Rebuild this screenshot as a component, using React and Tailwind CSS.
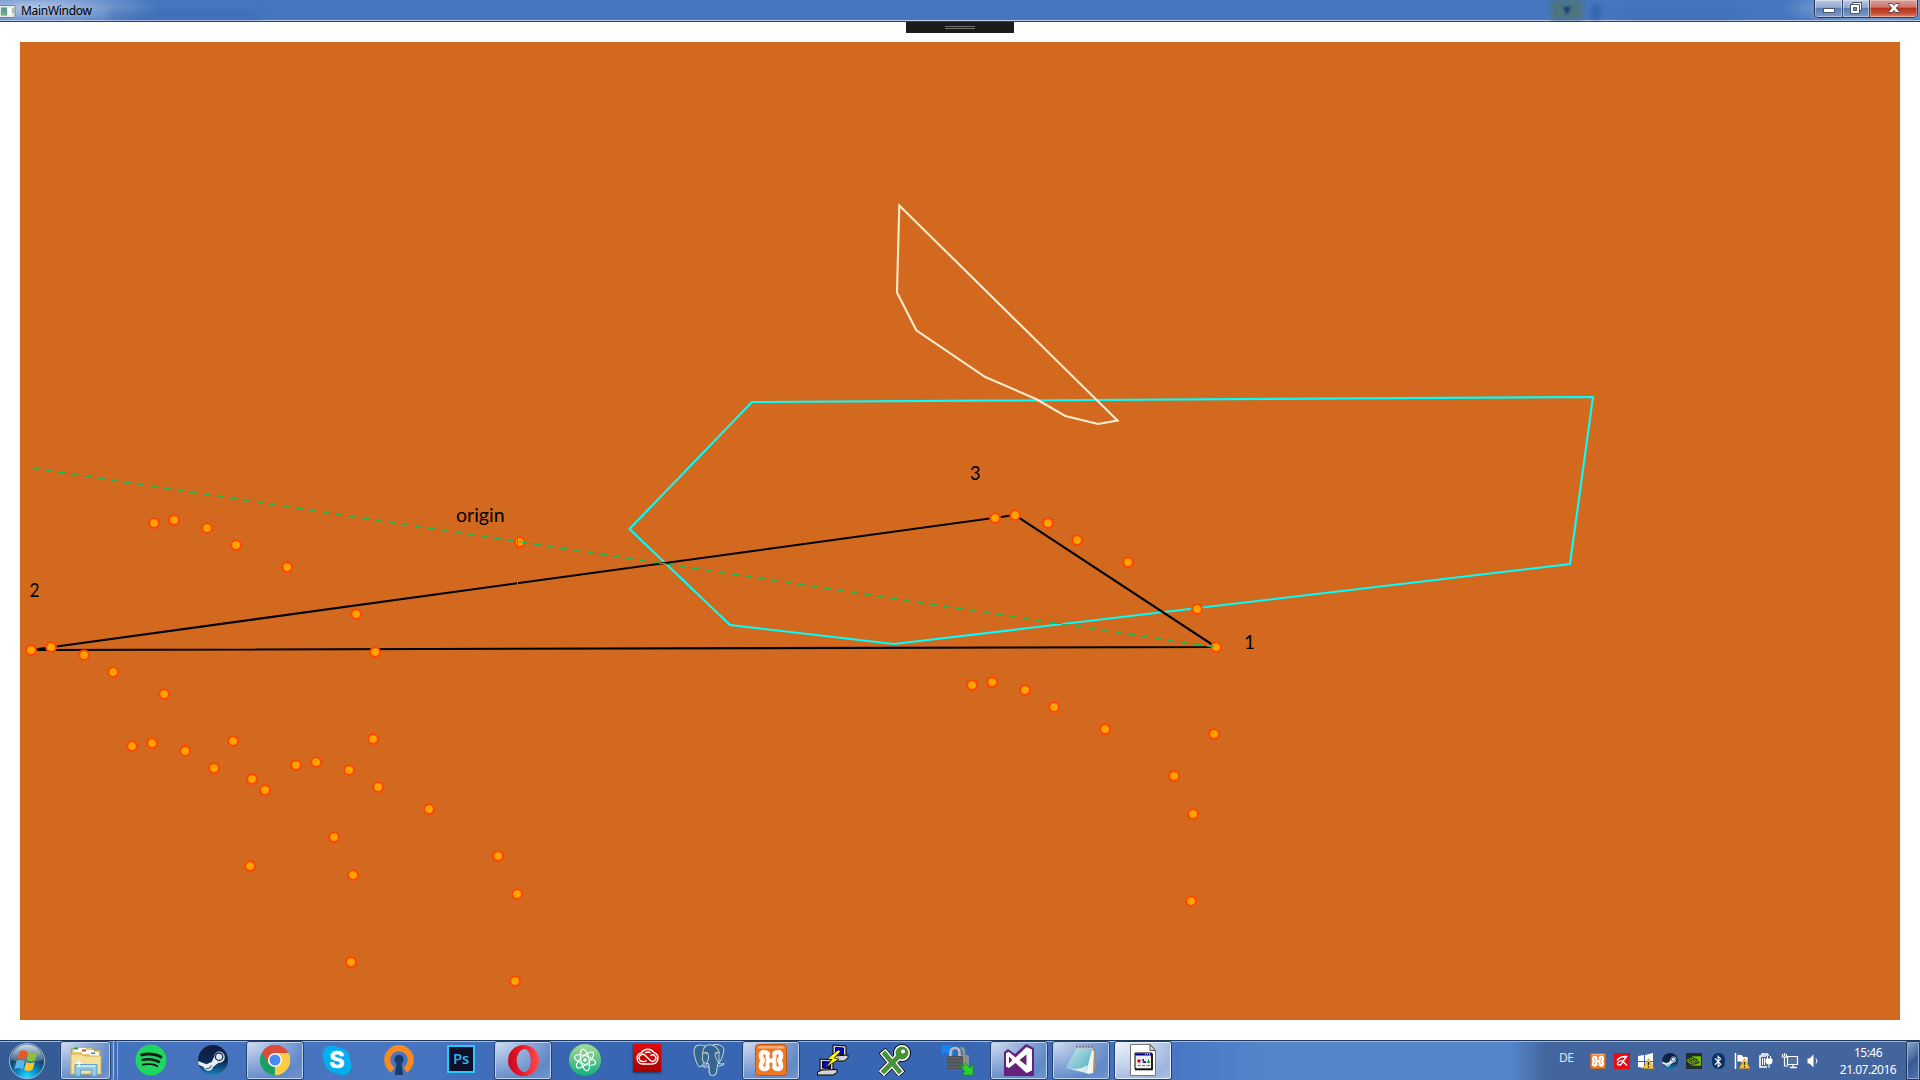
import React from "react";
import { FaSpotify, FaBluetoothB } from "react-icons/fa";
import { SiPostgresql, SiNvidia } from "react-icons/si";

const ARC = [[0, 0], [20, -3], [53, 5], [82, 22], [133, 44], [202, 91], [221, 129], [219, 216]];
const ARC_STARTS = [[154, 523], [31, 650], [132, 746], [296, 765], [995, 518], [972, 685]];

function Dot({ x, y }) {
  return <circle cx={x + 0.1} cy={y + 0.1} r="4.9" fill="#ffa500" stroke="#ff4500" strokeWidth="2.1" />;
}

function Plot() {
  return (
    <svg className="block h-[978px] w-[1880px]" viewBox="20 42 1880 978">
      <g fill="none" strokeWidth="2.1">
        <path stroke="#00ffff" d="M752 402 1593 397 1570 564 894 644 730 625 629.5 529Z" />
        <path stroke="#ffebcd" d="M899.3 205.5 897 292.5 916.3 330.3 985.3 377 1036 399 1065.3 416 1098 424 1117.5 420.5Z" />
        <path stroke="#000" d="M31 650 1216 647 1015 515Z" />
      </g>
      {ARC_STARTS.map(([sx, sy]) => ARC.map(([dx, dy]) => <Dot key={`${sx + dx}-${sy + dy}`} x={sx + dx} y={sy + dy} />))}
      <Dot x={519.6} y={542} />
      <g fill="none" stroke="#22b14c" strokeWidth="1" shapeRendering="crispEdges">
        <path d="M34 468.3 1214 647" />
        <path d="M517.5 413.5V647.5" />
      </g>
      <g fill="#000" className="font-['Lato',sans-serif] text-[20px]">
        <text x="456" y="522" textLength="48.5" lengthAdjust="spacingAndGlyphs">origin</text>
        <text x="29.5" y="597" textLength="10" lengthAdjust="spacingAndGlyphs">2</text>
        <text x="970" y="480" textLength="10.5" lengthAdjust="spacingAndGlyphs">3</text>
        <text x="1244" y="649" textLength="11" lengthAdjust="spacingAndGlyphs">1</text>
      </g>
    </svg>
  );
}

function TitleBar() {
  return (
    <header className="relative flex h-[22px] shrink-0 items-start justify-between overflow-hidden border-b border-[#2b4268] bg-[#4776bf] shadow-[inset_0_-1px_0_#b9cbe8]">
      <div className="absolute -left-8 -top-3 h-10 w-[190px] bg-[radial-gradient(ellipse_at_35%_50%,#b4c8e8,#4776bf00_72%)]" />
      <div className="absolute left-[108px] top-[11px] h-2 w-[150px] bg-[#3260a8]/40 blur-[4px]" />
      <div className="absolute left-[1551px] top-0 h-[20px] w-8 bg-[#4c7580] blur-[2px]" />
      <div className="absolute left-[1560px] top-[5px] text-[14px] leading-[10px] text-[#173e7b] blur-[1px]">▼</div>
      <div className="absolute left-[1592px] top-[5px] h-[14px] w-2 rotate-12 bg-[#2457a5]/70 blur-[3px]" />
      <div className="absolute left-[1620px] top-[10px] h-[8px] w-[120px] bg-[#3563a8]/40 blur-[4px]" />
      <div className="absolute -top-3 left-[1780px] h-10 w-[180px] bg-[radial-gradient(ellipse,#a9bfe3,#4776bf00_70%)]" />
      <div className="relative flex items-center pt-[4px]">
        <svg className="block h-[13px] w-4" viewBox="0 0 16 13">
          <rect x="-1" y=".5" width="16" height="12" rx="1" fill="#e7e9ea" stroke="#7d8792" />
          <path d="M1 2.500h6v8H1z" fill="#5899a0" />
          <path d="M2 10V4l5 6z" fill="#68b286" />
          <path d="M8 3h3v7H8z" fill="#fff" />
          <path d="M12 3h2v5h-2z" fill="#a4c8ae" />
        </svg>
        <span className="ml-[5px] whitespace-nowrap font-['Noto_Sans',sans-serif] text-[12px] leading-[14px] tracking-[-0.3px] text-black">MainWindow</span>
      </div>
      <div className="relative mr-[2px] flex h-[18px] overflow-hidden rounded-b-[5px] border border-t-0 border-[#263757]">
        <div className="flex w-[28px] items-center justify-center border-r border-[#34486d] bg-[linear-gradient(#b9c9e2_0,#91a8cd_45%,#5c7db1_50%,#7f9ccb)] shadow-[inset_0_0_0_1px_#ffffff66]">
          <div className="mt-[4px] h-[5px] w-[12px] border border-[#4b556b] bg-white" />
        </div>
        <div className="flex w-[27px] items-center justify-center border-r border-[#34486d] bg-[linear-gradient(#b9c9e2_0,#91a8cd_45%,#5c7db1_50%,#7f9ccb)] shadow-[inset_0_0_0_1px_#ffffff66]">
          <svg className="mb-[2px] block h-3 w-3" viewBox="0 0 12 12">
            <path d="M2.500.5h9v8h-9z" fill="#fff" stroke="#4b556b" />
            <path d="M.5 2.500h9v9h-9z" fill="#fff" stroke="#4b556b" />
            <path d="M3.500 5.500h3v3h-3z" fill="#6f8fbd" stroke="#4b556b" />
          </svg>
        </div>
        <div className="flex w-[47px] items-center justify-center bg-[linear-gradient(#dca09b_0,#cd756a_42%,#b5301c_48%,#c94f36_80%,#df8b70)] shadow-[inset_0_0_0_1px_#ffffff55]">
          <svg className="mb-[2px] block h-3 w-3" viewBox="0 0 12 12">
            <path d="M.8 1.500h3.500L6 3.500l1.700-2h3.500v1.200L8.300 6l2.900 3.300v1.200H7.700L6 8.500l-1.700 2H.8V9.300L3.700 6 .8 2.700z" fill="#fff" stroke="#5d4251" />
          </svg>
        </div>
      </div>
    </header>
  );
}

function Icon({ children, size = "h-8 w-8" }) {
  return <svg className={`block ${size}`} viewBox="0 0 32 32">{children}</svg>;
}

function StartOrb() {
  return (
    <svg className="ml-[8px] mt-[1px] block h-[38px] w-[38px]" viewBox="0 0 38 38">
      <defs>
        <radialGradient id="orb" cx=".5" cy=".95" r=".8">
          <stop offset="0" stopColor="#23dcff" /><stop offset=".35" stopColor="#0c8fc9" /><stop offset=".75" stopColor="#12446e" /><stop offset="1" stopColor="#35597d" />
        </radialGradient>
        <linearGradient id="orbShine" x2="0" y2="1"><stop stopColor="#dbe7f0" stopOpacity=".95" /><stop offset="1" stopColor="#8ba6bd" stopOpacity=".35" /></linearGradient>
      </defs>
      <circle cx="19" cy="19" r="17.500" fill="url(#orb)" stroke="#a6c0d8" />
      <path d="M3 18a16 15.500 0 0 1 32 0q-15 4-32 0z" fill="url(#orbShine)" />
      <path d="M11.500 9.500q4-2.500 8 .2l-2 8q-4-2.500-8.500-.2z" fill="#ea5727" />
      <path d="M20.500 10.200q4.500 2.300 9-.2l-2.300 8.300q-4 2.300-8.500-.2z" fill="#8fc03b" />
      <path d="M8.500 19q4.300-2.300 8.500.3l-2.200 8q-4-2.500-8.300-.3z" fill="#5fb4e8" />
      <path d="M18.300 20q4.400 2.300 8.500-.2l-2.200 8q-4.200 2.300-8.500 0z" fill="#fdc72c" />
    </svg>
  );
}

function Explorer() {
  return (
    <Icon>
      <path d="M1.500 6V3.500H8L10 5h4V3l8-.5 1 3h7V28H1z" fill="#e9ca72" stroke="#c3a14b" />
      <path d="M4 3h12v4H4z" fill="#fff" /><path d="M4 2.500h4v2H4z" fill="#18a830" />
      <path d="M12 5h12v4H12z" fill="#fff" /><path d="M12 4.500h4v2h-4z" fill="#df4533" />
      <path d="M20 7.500h9v4h-9z" fill="#fff" /><path d="M21 7.500h4v1.500h-4z" fill="#2d86e4" />
      <path d="M1 9h11l2 2h17v18H1z" fill="#f4e09a" stroke="#d0b261" />
      <path d="M5 31V19.500h22V31h-5.500v-6h-11v6z" fill="#8ecbe8" stroke="#5ba0c5" />
      <path d="M6.500 21h19" stroke="#d6f0fb" strokeWidth="1.500" />
      <path d="m9 13 .8 4.200 4.200.8-4.200.8L9 23l-.8-4.200L4 18l4.200-.8z" fill="#fff" />
    </Icon>
  );
}

function Spotify() {
  return (
    <div className="flex h-8 w-8 items-center justify-center rounded-full bg-[radial-gradient(#1a1a1a_60%,transparent_62%)]">
      <FaSpotify className="block h-8 w-8 text-[#1ed760]" />
    </div>
  );
}

function Steam({ small }) {
  return (
    <Icon size={small ? "h-4 w-4" : "h-[30px] w-[30px]"}>
      <defs><linearGradient id="steam" x2="0" y2="1"><stop stopColor="#101a3c" /><stop offset=".55" stopColor="#0b2a55" /><stop offset="1" stopColor="#1580b4" /></linearGradient></defs>
      <circle cx="16" cy="16" r="16" fill="url(#steam)" />
      <path d="M0 17 9 20.500 14.500 18 17 13q1-6 6-6a6 6 0 1 1-1 12l-6 4.500q-1 4-5 4-3.500 0-5-4L.8 21z" fill="#e8edf3" />
      <circle cx="22.500" cy="12.500" r="4.700" fill="#1a3157" /><circle cx="22.500" cy="12.500" r="3.300" fill="#dfe6ed" />
      <path d="M8 25q6 1 6-3.500" fill="none" stroke="#536884" strokeWidth="1.200" />
    </Icon>
  );
}

function Chrome() {
  return (
    <Icon size="h-[30px] w-[30px]">
      <path d="M16 16 2.140 8A16 16 0 0 1 29.860 8z" fill="#dd4b3e" />
      <path d="M16 16 29.860 8A16 16 0 0 1 16 32z" fill="#ffcd43" />
      <path d="M16 16V32A16 16 0 0 1 2.140 8z" fill="#1aa160" />
      <path d="M16 8.500h14.200L29.860 8A16 16 0 0 0 2.140 8l7.300 12z" fill="#dd4b3e" />
      <path d="M22.500 20 15.500 32A16 16 0 0 0 30.200 8.500H16z" fill="#ffcd43" />
      <circle cx="16" cy="16" r="7.500" fill="#fff" /><circle cx="16" cy="16" r="5.900" fill="#4a8af4" />
    </Icon>
  );
}

function Skype() {
  return (
    <Icon size="h-[30px] w-[30px]">
      <circle cx="10" cy="10" r="9.500" fill="#00aff0" /><circle cx="22" cy="22.500" r="9.500" fill="#00aff0" /><circle cx="16" cy="16" r="14" fill="#00aff0" />
      <text x="16" y="25" textAnchor="middle" fill="#fff" stroke="#fff" strokeWidth=".6" className="font-['Inter',sans-serif] text-[25px] font-bold">S</text>
    </Icon>
  );
}

function OpenVpn() {
  return (
    <Icon size="h-[30px] w-[30px]">
      <path d="M9.500 26.500A12.500 12.500 0 1 1 22.500 26.500" fill="none" stroke="#f78a20" strokeWidth="6.500" />
      <circle cx="16" cy="15.500" r="5" fill="#173c6c" /><path d="M13.500 19h5l2 13h-9z" fill="#173c6c" />
    </Icon>
  );
}

function Photoshop() {
  return (
    <div className="mb-[3px] flex h-[28px] w-[28px] items-center justify-center border-2 border-[#26c9fb] bg-[#100f2b] font-['Open_Sans',sans-serif] text-[15px] font-semibold leading-none tracking-[-0.2px] text-[#2bb8ed]">Ps</div>
  );
}

function Opera() {
  return (
    <Icon size="h-[31px] w-[31px]">
      <defs><linearGradient id="opera" x2="1"><stop stopColor="#c9061d" /><stop offset=".5" stopColor="#ee1c2e" /><stop offset="1" stopColor="#ff4b4b" /></linearGradient></defs>
      <path fillRule="evenodd" d="M16 0a16 16 0 1 0 0 32 16 16 0 1 0 0-32zm1 4c4 0 6.500 5.500 6.500 12S21 28 17 28 9 22.500 9 16 13 4 17 4z" fill="url(#opera)" />
    </Icon>
  );
}

function AtomIcon() {
  return (
    <Icon>
      <defs><linearGradient id="atom" x2="0" y2="1"><stop stopColor="#a6dc96" /><stop offset="1" stopColor="#10ad7c" /></linearGradient></defs>
      <circle cx="16" cy="16" r="16" fill="url(#atom)" />
      <g fill="none" stroke="#fff" strokeWidth="1.200" transform="rotate(18 16 16)">
        <ellipse cx="16" cy="16" rx="11" ry="4.200" /><ellipse cx="16" cy="16" rx="11" ry="4.200" transform="rotate(60 16 16)" /><ellipse cx="16" cy="16" rx="11" ry="4.200" transform="rotate(120 16 16)" />
      </g>
      <circle cx="16" cy="16" r="1.800" fill="#fff" />
    </Icon>
  );
}

function CreativeCloud() {
  return (
    <div className="mb-[4px] h-[28px] w-[28px] bg-[linear-gradient(#df0b0b,#a80000)] shadow-[0_1px_2px_#0008]">
      <svg className="block h-[28px] w-[28px]" viewBox="0 0 28 28">
        <g fill="none" stroke="#fff" strokeWidth="1.400">
          <path d="M9.500 20a5.800 5.800 0 0 1-1-11.400A7.500 7.500 0 0 1 20.800 8.300 6 6 0 0 1 19 20z" />
          <path d="M13.500 16.500Q12 18 10 17.500A3.600 3.600 0 1 1 12 11.200l5.500 5.300a3.200 3.200 0 1 0 0-4.800" />
          <path d="M12 9q3-2 5.500 0" />
        </g>
      </svg>
    </div>
  );
}

function Postgres() {
  return (
    <div className="relative h-8 w-8">
      <svg className="absolute inset-0 block h-8 w-8" viewBox="0 0 32 32"><path d="M9 1Q1 0 1 8q1 12 5 15l5-3h4l1 9q1 3 5 2 3-1 3-9l6-2-3-2q5-8 4-13-4-6-10-4l-5 0z" fill="#336791" /></svg>
      <SiPostgresql className="relative block h-8 w-8 text-[#c5d1d8]" />
    </div>
  );
}

function Xampp({ small }) {
  return (
    <Icon size={small ? "h-4 w-4" : "h-8 w-8"}>
      <rect x=".5" y=".5" width="31" height="31" rx="3" fill="#ef7622" stroke="#c6550d" />
      <path d="M2 4.500 4 2h24l2 2.500z" fill="#f9ad6f" />
      <g fill="none" stroke="#fff" strokeWidth="4.600" strokeLinecap="round" strokeLinejoin="round">
        <path d="M12.500 9.500Q11.500 8 9.500 8 6 8 6 11.500 6 14 8 16.500 6 19 6 21.500 6 25 9.500 25 11.500 25 12.500 23.500" />
        <path d="M19.500 9.500Q20.500 8 22.500 8 26 8 26 11.500 26 14 24 16.500 26 19 26 21.500 26 25 22.500 25 20.500 25 19.500 23.500" />
        <path strokeWidth="4" d="M12.500 9.500V13.500Q12.500 16.500 16 16.500T19.500 13.500V9.500M12.500 23.500V19.500Q12.500 16.500 16 16.500T19.500 19.500V23.500" />
      </g>
    </Icon>
  );
}

function Putty() {
  return (
    <Icon>
      <g stroke="#000" strokeWidth="1">
        <path d="m16 1 13 1v11l-13-1z" fill="#d4d4d4" /><path d="m18.500 3.500 8 .5v6.500l-8-.5z" fill="#0000e8" />
        <path d="m18 12 13-1v3l-4 3H14v-3z" fill="#d4d4d4" />
        <path d="m3 15 13 1v11L3 26z" fill="#d4d4d4" /><path d="m5.500 17.500 8 .5v6.500l-8-.5z" fill="#0000e8" />
        <path d="m5 26 15-.5v3L16 31H.5v-3z" fill="#d4d4d4" />
        <path d="m21 6-11 9 5 .5L8 24l14-9-5-1 7-7z" fill="#ffff00" strokeWidth=".7" />
      </g>
    </Icon>
  );
}

function GreenKey() {
  return (
    <Icon>
      <g fill="none">
        <path d="m6 10 14 17M5 27 20 12" stroke="#000" strokeWidth="9" strokeLinecap="square" />
        <circle cx="23" cy="9" r="7" fill="#000" stroke="#000" strokeWidth="4" />
        <path d="m6 10 14 17M5 27 20 12" stroke="#fff" strokeWidth="7.500" strokeLinecap="square" />
        <circle cx="23" cy="9" r="6.500" fill="#fff" stroke="#fff" strokeWidth="3" />
        <path d="m6 10 14 17M5 27 20 12" stroke="#45923a" strokeWidth="4.800" strokeLinecap="square" />
        <circle cx="23" cy="9" r="5" fill="#45923a" stroke="#45923a" strokeWidth="3" />
        <circle cx="24" cy="7.500" r="2" fill="#fff" />
      </g>
    </Icon>
  );
}

function LockTransfer() {
  return (
    <Icon>
      <path d="M23 13V9q0-5-3.500-5" fill="none" stroke="#8e9296" strokeWidth="3" />
      <rect x="19" y="11" width="9" height="11" rx="1" fill="#8a8e92" />
      <path d="M1 1h11L9 4l5 5-4 4-5-5-4 3z" fill="#1684f3" />
      <path d="M9.500 13V9q0-5 4.500-5t4.500 5v4" fill="none" stroke="#b9bdc1" strokeWidth="2.600" />
      <rect x="6" y="12" width="16" height="13" rx="1" fill="#4c4f53" /><path d="M6.500 14h15M6.500 17h15M6.500 20h15M6.500 23h15" stroke="#6b6e72" />
      <path d="m17 19 5 4 2-4 5 5 3-4v11H21l3-3z" fill="#2bd22e" stroke="#128519" strokeWidth=".7" />
    </Icon>
  );
}

function VisualStudio() {
  return (
    <Icon>
      <path d="M1 8 5 5l7 5L23 0l8 4v28H1z" fill="#68217a" />
      <path fillRule="evenodd" d="m3 9 3-1 6.500 5.500L23.500 3l5.500 2.500v21L23.500 29 12.500 19 6 24l-3-1.500zM6 12.500v7l3.500-3.500zm10.500 3.500 7 5.500v-11z" fill="#fff" />
    </Icon>
  );
}

function Notepad() {
  return (
    <Icon>
      <defs><linearGradient id="note" x2="1" y2="1"><stop stopColor="#c6edf2" /><stop offset="1" stopColor="#4da7ba" /></linearGradient></defs>
      <path d="M27 5h4v21l-7 4-2-2z" fill="#a88d5f" /><path d="M26 5 29 7l-1 22-5 1-3-2z" fill="#f2f3ec" />
      <path d="M12 3h16l-7 25L1 24z" fill="url(#note)" /><path d="M1 24q13 3 21-3l-1 8z" fill="#d9ecec" />
      <path d="M12 1.500v3M15 1.500v3M18 1.500v3M21 1.500v3M24 1.500v3M27 1.500v3" stroke="#777f7d" strokeWidth="1.500" /><path d="M11 4.500h17" stroke="#c4c9c5" />
    </Icon>
  );
}

function AppDocument() {
  return (
    <Icon>
      <path d="M3.500.5H23l5.500 6v25h-25z" fill="#fff" stroke="#777" /><path d="M23 .5v6h5.500z" fill="#ddd" stroke="#555" />
      <path d="M8 9h17v16H8z" fill="#eee" stroke="#000" /><path d="M8.500 9.500h16v2h-16z" fill="#00008b" />
      <path d="M18 10h1M20 10h1M22 10h1" stroke="#fff" /><path d="M25 10v15.500H8" fill="none" stroke="#000" strokeWidth="1.500" />
      <circle cx="12" cy="17" r="1.700" fill="#d90000" /><path d="M15 15h2v2h2v2h-3z" fill="#1b2bda" /><path d="m20 19 1.500-4 1.500 4z" fill="#118b25" />
      <path d="M11 21.500h2.500M15 21.500h3M19.500 21.500H23" stroke="#777" />
    </Icon>
  );
}

const APPS = [
  { id: "spotify", icon: <Spotify /> },
  { id: "steam", icon: <Steam /> },
  { id: "chrome", icon: <Chrome />, open: true },
  { id: "skype", icon: <Skype /> },
  { id: "openvpn", icon: <OpenVpn /> },
  { id: "photoshop", icon: <Photoshop /> },
  { id: "opera", icon: <Opera />, open: true },
  { id: "atom", icon: <AtomIcon /> },
  { id: "cc", icon: <CreativeCloud /> },
  { id: "postgres", icon: <Postgres /> },
  { id: "xampp", icon: <Xampp />, open: true },
  { id: "putty", icon: <Putty /> },
  { id: "key", icon: <GreenKey /> },
  { id: "transfer", icon: <LockTransfer /> },
  { id: "vs", icon: <VisualStudio />, open: true },
  { id: "notepad", icon: <Notepad />, open: true },
  { id: "document", icon: <AppDocument />, active: true },
];

const OPEN_STYLE = "border border-[#23406f] bg-[radial-gradient(ellipse_at_0%_0%,#d2def2_0%,#95b0db_38%,#6189c8_75%,#7195cf_100%)] shadow-[inset_0_0_0_1px_#bfd0eb]";
const ACTIVE_STYLE = "border border-[#23406f] bg-[radial-gradient(ellipse_at_0%_0%,#f0f5fc_0%,#c4d3ec_45%,#9cb5de_80%,#adc4e8_100%)] shadow-[inset_0_0_0_1px_#e6eefa]";

function TaskButton({ app }) {
  const look = app.active ? ACTIVE_STYLE : app.open ? OPEN_STYLE : "";
  return <div className={`flex h-[39px] w-[58px] items-center justify-center rounded-[3px] pb-px ${look}`}>{app.icon}</div>;
}

function Warning() {
  return <g><path d="m10.500 5.500 5.500 10H5z" fill="#fbc72b" stroke="#a97908" strokeWidth=".5" /><path d="M10.500 9v3M10.500 13v1.500" stroke="#322200" strokeWidth="1.300" /></g>;
}

function TrayIcon({ children }) {
  return <svg className="block h-4 w-4 overflow-visible" viewBox="0 0 16 16">{children}</svg>;
}

function Tray() {
  return (
    <div className="ml-auto flex items-start">
      <span className="mr-[16px] mt-[9px] w-[15px] font-['Noto_Sans',sans-serif] text-[12px] leading-[16px] tracking-[-0.4px] text-[#dce5f1]">DE</span>
      <div className="mt-[12px] flex gap-2">
        <Xampp small />
        <TrayIcon><path d="M0 0h16v16H0z" fill="#e30c16" /><path d="M3 7.500Q6 3 12.500 3.500L9 8.500Q7 6.500 4.500 9 2 12 5 12 7.500 12 9 8.500L13 12.500" fill="none" stroke="#fff" strokeWidth="1.400" /></TrayIcon>
        <TrayIcon><path d="m0 3 6-1v6H0zm7-1 8-2v8H7zM0 9h6v6l-6-1zm7 0h8v7l-8-1z" fill="#fff" /><Warning /></TrayIcon>
        <Steam small />
        <div className="flex h-4 w-4 items-center justify-center bg-[#252b29]"><SiNvidia className="h-[14px] w-[14px] text-[#76b900]" /></div>
        <div className="flex h-4 w-4 items-center justify-center"><span className="flex h-4 w-[13px] items-center justify-center rounded-[6px] bg-[#0a3367]"><FaBluetoothB className="h-[13px] w-[10px] text-white" /></span></div>
        <TrayIcon><path d="M1.500 0v16" stroke="#fff" strokeWidth="1.500" /><path d="M3 1.500h5l1 2h5V11H8L7 9H3z" fill="#fff" stroke="#2a3c5c" strokeWidth=".6" /><Warning /></TrayIcon>
        <TrayIcon><path d="M4 2V1h5v1h2M9 14H2V3h6" fill="none" stroke="#fff" strokeWidth="1.600" /><path d="M4.500 5v7M6.500 5v7" stroke="#fff" /><path d="M8 6h6v3q0 2-3 2t-3-2zM9.500 3v3M12.500 3v3M11 11v4" fill="#fff" stroke="#fff" /></TrayIcon>
        <TrayIcon><path d="M5.500 3.500h10v8h-10z" fill="#53719f" stroke="#fff" strokeWidth="1.200" /><path d="M8 14.500h7M11 12v2" stroke="#fff" strokeWidth="1.300" /><path d="M.5 1v3h4V1M2.500 0v3M2.500 4v9h4" fill="none" stroke="#fff" strokeWidth="1.200" /></TrayIcon>
        <TrayIcon><path d="M1.500 5.500h2l4-4v13l-4-4h-2z" fill="#fff" /><path d="M10 5.500q2 2.500 0 5" fill="none" stroke="#fff" /></TrayIcon>
      </div>
      <div className="ml-[11px] flex w-[70px] flex-col items-center pt-[3px] font-['Noto_Sans',sans-serif] text-[12px] leading-[17px] tracking-[-0.5px] text-white">
        <span>15:46</span>
        <span>21.07.2016</span>
      </div>
      <div className="ml-[3px] h-[39px] w-[14px] rounded-[1px] border border-[#24395e] bg-[linear-gradient(135deg,#8ea8cc_0,#47699c_45%,#345891_50%,#5079b8)] shadow-[inset_0_0_0_1px_#91abd0]" />
    </div>
  );
}

function Taskbar() {
  return (
    <footer className="flex h-10 shrink-0 border-t border-[#20395f] bg-[linear-gradient(90deg,#365c96_0,#365c96_58px,#4371bc_62px,#4876c1_400px,#3866b2_560px,#3866b2_960px,#4876c3_1170px,#5484c9_1260px,#5484c9_1512px,#41659c_1548px)] shadow-[inset_0_1px_0_#9eb7dc]">
      <div className="w-[60px]"><StartOrb /></div>
      <div className={`flex h-[39px] w-[51px] items-center justify-center rounded-[3px] ${OPEN_STYLE}`}><Explorer /></div>
      <div className="mr-[4px] flex w-[7px] gap-[1px]">
        <span className="h-[39px] w-[3px] rounded-r-[2px] border-r border-[#a5bde2] bg-[#4f78b8]" />
        <span className="h-[39px] w-[3px] rounded-r-[2px] border-r border-[#8ba8d6] bg-[#416eb3]" />
      </div>
      <div className="flex gap-1">{APPS.map((app) => <TaskButton key={app.id} app={app} />)}</div>
      <Tray />
    </footer>
  );
}

export default function App() {
  return (
    <div className="flex h-[1080px] w-[1920px] flex-col overflow-hidden bg-white">
      <TitleBar />
      <main className="relative grow px-5 pt-5">
        <div className="absolute left-[906px] top-0 flex h-[11px] w-[108px] flex-col items-center gap-[1px] bg-[#1b1b1b] pt-[4px]">
          <div className="h-px w-[30px] bg-[#747474]" />
          <div className="h-px w-[30px] bg-[#747474]" />
        </div>
        <div className="h-[978px] w-[1880px] bg-[#d2691e]"><Plot /></div>
      </main>
      <Taskbar />
    </div>
  );
}
